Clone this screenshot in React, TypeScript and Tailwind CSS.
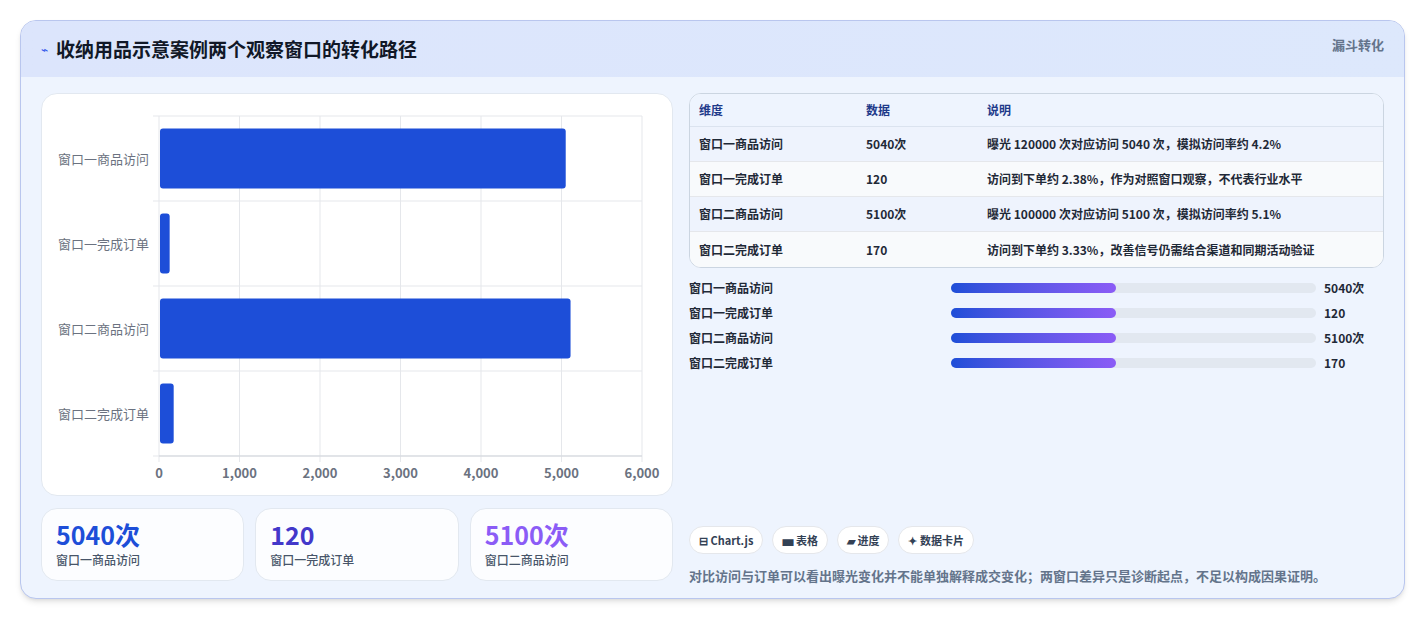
import React from "react";

const F = { fontFamily: '"Noto Sans CJK SC","Noto Sans",sans-serif' };
const rows = [
  ["窗口一商品访问", "5040次", "曝光 120000 次对应访问 5040 次，模拟访问率约 4.2%", 5040],
  ["窗口一完成订单", "120", "访问到下单约 2.38%，作为对照窗口观察，不代表行业水平", 120],
  ["窗口二商品访问", "5100次", "曝光 100000 次对应访问 5100 次，模拟访问率约 5.1%", 5100],
  ["窗口二完成订单", "170", "访问到下单约 3.33%，改善信号仍需结合渠道和同期活动验证", 170],
] as const;

function Chart() {
  const x0 = 117, w = 483, y0 = 22, h = 340;
  const band = h / 4;
  return (
    <svg width="632" height="402" className="block">
      {[0, 1, 2, 3, 4, 5, 6].map((i) => (
        <g key={i}>
          <line x1={x0 + (w * i) / 6} x2={x0 + (w * i) / 6} y1={y0} y2={y0 + h + 6} stroke="#e5e7eb" />
          <text x={x0 + (w * i) / 6} y={384} textAnchor="middle" fontSize="13" fill="#6b7280" fontWeight="600" style={F}>
            {(i * 1000).toLocaleString("en-US")}
          </text>
        </g>
      ))}
      {[0, 1, 2, 3, 4].map((i) => (
        <line key={i} x1={x0 - 6} x2={x0 + w} y1={y0 + band * i} y2={y0 + band * i} stroke="#e5e7eb" />
      ))}
      <line x1={x0} x2={x0 + w} y1={y0 + h} y2={y0 + h} stroke="#d1d5db" />
      {rows.map((r, i) => (
        <g key={i}>
          <rect x={x0 + 1} y={y0 + band * i + 12.5} width={(w * (r[3] as number)) / 6000} height={60} rx="3" fill="#1d4ed8" />
          <text x={x0 - 10} y={y0 + band * i + band / 2 + 5} textAnchor="end" fontSize="13" fill="#6b7280" style={F}>
            {r[0]}
          </text>
        </g>
      ))}
    </svg>
  );
}

export default function App() {
  return (
    <div className="w-[1426px] h-[621px] bg-white pt-[20px] pl-[20px]" style={F}>
      <div className="w-[1385px] h-[579px] rounded-2xl border border-[#b9c6ee] bg-[#eef4fe] overflow-hidden shadow-md">
        <div className="h-[56px] bg-gradient-to-r from-[#dce5fc] to-[#dde8fc] flex items-start justify-between px-5">
          <div className="flex items-center gap-2 h-[56px]">
            <span className="text-[#2f54eb] text-xs">⌁</span>
            <span className="text-[19px] font-bold text-[#111827]">收纳用品示意案例两个观察窗口的转化路径</span>
          </div>
          <span className="mt-[14px] text-[13px] font-bold text-[#64748b]">漏斗转化</span>
        </div>
        <div className="flex gap-4 px-5 pt-4">
          <div className="w-[632px] flex flex-col gap-3">
            <div className="h-[403px] bg-white rounded-2xl border border-[#e2e8f0]">
              <Chart />
            </div>
            <div className="flex gap-[11px]">
              {[
                ["5040次", "窗口一商品访问", "text-[#1d4ed8]"],
                ["120", "窗口一完成订单", "text-[#4338ca]"],
                ["5100次", "窗口二商品访问", "text-[#8b5cf6]"],
              ].map(([v, l, c]) => (
                <div key={l} className="w-[204px] h-[73px] bg-white/80 rounded-2xl border border-[#e2e8f0] px-[14px] pt-[8px]">
                  <div className={`text-[25px] font-bold leading-[34px] ${c}`}>{v}</div>
                  <div className="text-[12px] text-[#475569] font-medium">{l}</div>
                </div>
              ))}
            </div>
          </div>
          <div className="w-[700px] flex flex-col">
            <div className="rounded-xl border border-[#cbd5e1] overflow-hidden bg-white">
              <div className="grid grid-cols-[167px_121px_1fr] h-[33px] items-center px-[9px] bg-[#eef4fe] text-[12px] font-bold text-[#1e3a8a] border-b border-[#dbe3ef]">
                <span>维度</span><span>数据</span><span>说明</span>
              </div>
              {rows.map((r, i) => (
                <div key={i} className={`grid grid-cols-[167px_121px_1fr] h-[35px] items-center px-[9px] text-[12px] font-semibold text-[#1f2937] ${i % 2 ? "bg-[#f8fafc]" : "bg-[#eef3fd]"} ${i < 3 ? "border-b border-[#e5e7eb]" : ""}`}>
                  <span>{r[0]}</span><span>{r[1]}</span><span>{r[2]}</span>
                </div>
              ))}
            </div>
            <div className="flex flex-col gap-[9px] mt-[12px]">
              {rows.map((r, i) => (
                <div key={i} className="flex items-center h-[16px] text-[12px] font-semibold text-[#1f2937]">
                  <span className="w-[262px]">{r[0]}</span>
                  <div className="w-[365px] h-[10px] rounded-full bg-[#e2e8f0]">
                    <div className="w-[165px] h-[10px] rounded-full bg-gradient-to-r from-[#1d4ed8] to-[#8b5cf6]" />
                  </div>
                  <span className="ml-2 font-bold">{r[1]}</span>
                </div>
              ))}
            </div>
            <div className="flex gap-[9px] mt-[155px]">
              {["⊟ Chart.js", "▅ 表格", "▰ 进度", "✦ 数据卡片"].map((c) => (
                <span key={c} className="h-[28px] px-[9px] flex items-center rounded-full bg-white border border-[#e5e7eb] text-[11px] font-bold text-[#334155]">{c}</span>
              ))}
            </div>
            <div className="mt-[12px] text-[13px] font-semibold text-[#64748b]">对比访问与订单可以看出曝光变化并不能单独解释成交变化；两窗口差异只是诊断起点，不足以构成因果证明。</div>
          </div>
        </div>
      </div>
    </div>
  );
}
